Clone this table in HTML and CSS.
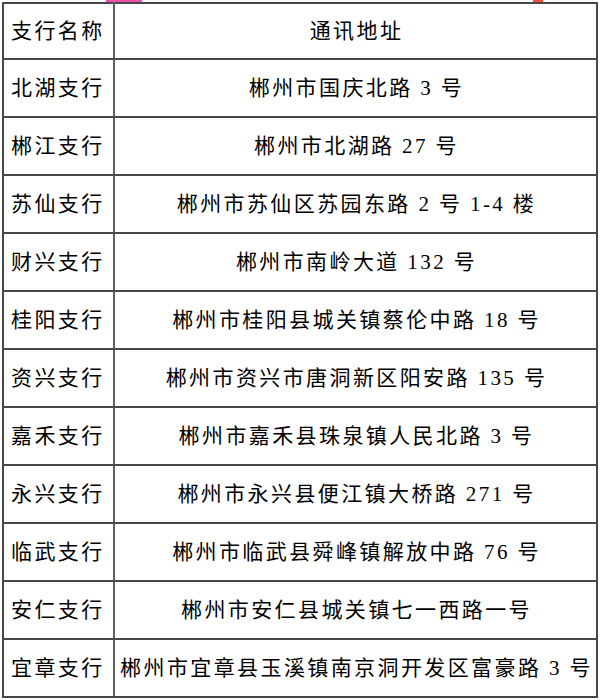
FILE: index.html
```html
<!DOCTYPE html>
<html lang="zh-CN">
<head>
<meta charset="utf-8">
<title>支行通讯地址</title>
<link rel="stylesheet" href="styles.css">
</head>
<body>
<div class="strip"><span class="mark pink"></span><span class="mark red"></span></div>
<table class="branches">
  <tr class="head"><td class="name">支行名称</td><td class="addr">通讯地址</td></tr>
  <tr><td class="name">北湖支行</td><td class="addr">郴州市国庆北路 3 号</td></tr>
  <tr><td class="name">郴江支行</td><td class="addr">郴州市北湖路 27 号</td></tr>
  <tr><td class="name">苏仙支行</td><td class="addr">郴州市苏仙区苏园东路 2 号 1-4 楼</td></tr>
  <tr><td class="name">财兴支行</td><td class="addr">郴州市南岭大道 132 号</td></tr>
  <tr><td class="name">桂阳支行</td><td class="addr">郴州市桂阳县城关镇蔡伦中路 18 号</td></tr>
  <tr><td class="name">资兴支行</td><td class="addr">郴州市资兴市唐洞新区阳安路 135 号</td></tr>
  <tr><td class="name">嘉禾支行</td><td class="addr">郴州市嘉禾县珠泉镇人民北路 3 号</td></tr>
  <tr><td class="name">永兴支行</td><td class="addr">郴州市永兴县便江镇大桥路 271 号</td></tr>
  <tr><td class="name">临武支行</td><td class="addr">郴州市临武县舜峰镇解放中路 76 号</td></tr>
  <tr><td class="name">安仁支行</td><td class="addr">郴州市安仁县城关镇七一西路一号</td></tr>
  <tr><td class="name">宜章支行</td><td class="addr">郴州市宜章县玉溪镇南京洞开发区富豪路 3 号</td></tr>
</table>
</body>
</html>
```
FILE: styles.css
```css
html, body {
  margin: 0;
  padding: 0;
  background: #ffffff;
}
body {
  font-family: "Liberation Serif", "Noto Sans CJK SC", serif;
  color: #000000;
}
.strip {
  height: 2px;
  display: flex;
}
.mark {
  display: block;
  height: 2px;
}
.pink {
  margin-left: 106px;
  width: 36px;
  background: #f04fa8;
}
.red {
  margin-left: 391px;
  width: 10px;
  background: #f0503a;
}
.branches {
  border-collapse: collapse;
  margin-left: 2px;
  width: 596px;
  table-layout: fixed;
  font-size: 21px;
  letter-spacing: 2.4px;
}
.branches td {
  border: 2px solid #474747;
  height: 56px;
  padding: 0 2px;
  vertical-align: middle;
  white-space: nowrap;
  line-height: 24px;
}
.branches tr.head td {
  height: 54px;
}
.branches td.name {
  width: 100px;
  padding-left: 7px;
  text-align: left;
  border-right-color: #5e5e5e;
}
.branches td.addr {
  text-align: center;
  padding: 0 0 0 2px;
}
```
